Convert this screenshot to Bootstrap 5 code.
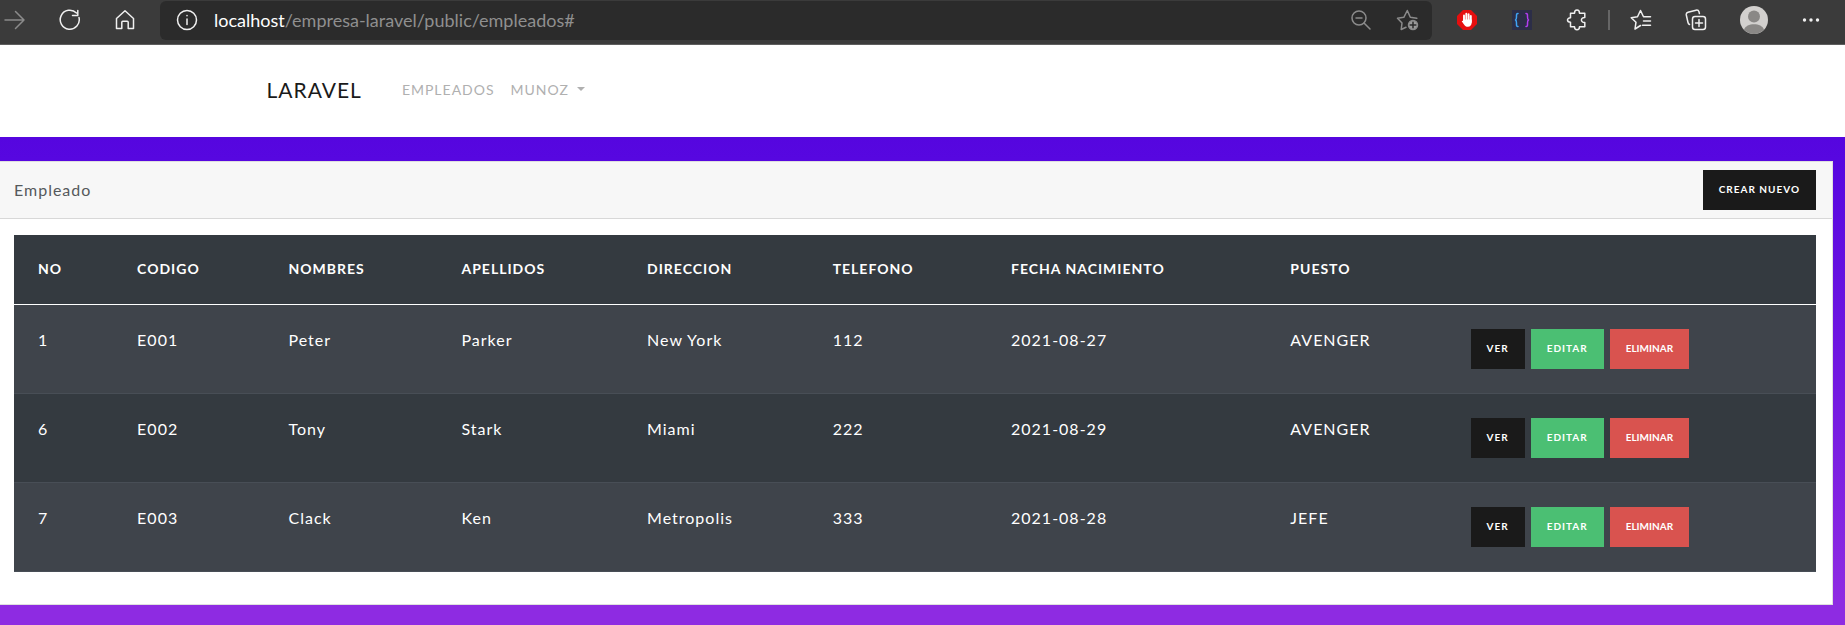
<!DOCTYPE html>
<html lang="es">
<head>
<meta charset="utf-8">
<meta name="viewport" content="width=device-width, initial-scale=1">
<title>Empleado</title>
<link href="https://cdn.jsdelivr.net/npm/bootstrap@5.3.0/dist/css/bootstrap.min.css" rel="stylesheet">
<style>
body { font-family: Lato, sans-serif; font-size: 16px; line-height: 24px; letter-spacing: 1px; color: #55595c; background: linear-gradient(to bottom, #4b00d9 0, #5707e0 160px, #8e2be2 600px); min-height: 100vh; }
.browser-bar { background: #3b3b3b; height: 45px; border-bottom: 1px solid #5e5e5e; letter-spacing: normal; padding: 0 24px 4px 4px; }
.browser-bar svg { display: block; fill: none; stroke: #f0f0f0; stroke-width: 1.5; stroke-linecap: round; stroke-linejoin: round; }
.browser-bar .dim { stroke: #8b8b8b; }
.bar-btn { background: none; border: 0; padding: 0; }
.nav-tools { gap: 33px; padding-right: 24px; }
.address { background: #2b2b2b; height: 39px; border-radius: 6px; padding: 0 12px 0 16px; gap: 16px; }
.address-text { font-size: 18px; color: #8f8f8f; }
.address-text b { font-weight: 400; color: #fff; }
.ext-tools { gap: 33px; padding-left: 24px; }
.ext-divider { width: 2px; height: 20px; background: #666; margin: 0 -13px; }
.site-nav { background: #fff; padding: 0 0 2px; height: 92px; }
.site-nav .container { max-width: 1336px; }
.site-nav .navbar-brand { font-size: 21px; color: #1a1a1a; margin-right: 32px; }
.site-nav .nav-link { font-size: 14px; color: #b0b0b0; }
.site-nav .dropdown-toggle::after { margin-left: 8px; }
.site-main { padding: 24px 12px 20px 0; }
.emp-card { border-radius: 0; border: 1px solid #dfdfdf; border-left: 0; background: #fff; }
.emp-card .card-header { background: #f7f7f7; border-bottom: 1px solid #d8d8d8; border-radius: 0; padding: 8px 16px 8px 14px; }
.emp-card .card-body { padding: 16px 16px 32px 14px; }
.btn-lux { border: 0; border-radius: 0; color: #fff; font-size: 10px; font-weight: 700; line-height: 16px; padding: 11px 16px 13px; letter-spacing: 1px; }
.btn-lux:hover { color: #fff; opacity: .9; }
.btn-ink, .btn-ink:hover { background: #1a1a1a; }
.btn-leaf, .btn-leaf:hover { background: #4bbf73; }
.btn-brick, .btn-brick:hover { background: #d9534f; letter-spacing: normal; }
.row-actions { gap: 6px; }
.emp-table { table-layout: fixed; margin: 0; }
.emp-table > :not(caption) > * > * { background: #343a40; color: #fff; padding: 23px 24px 25px; border-bottom: 1px solid #484e56; vertical-align: top; box-shadow: none; }
.emp-table > thead > tr > th { font-size: 14px; line-height: 21px; font-weight: 700; border-bottom-color: #fff; white-space: nowrap; }
.emp-table > tbody > tr:nth-child(odd) > td { background: #3f444b; }
.emp-table > tbody > tr > td.actions-cell { padding: 24px; }
.w-no { width: 5.5%; } .w-cod { width: 8.4%; } .w-nom { width: 9.6%; } .w-ape { width: 10.3%; } .w-dir { width: 10.3%; }
.w-tel { width: 9.9%; } .w-fec { width: 15.5%; } .w-pue { width: 10%; } .w-act { width: 20.5%; }
</style>
</head>
<body>
<header class="browser-bar d-flex align-items-center">
  <div class="nav-tools d-flex align-items-center">
    <button class="bar-btn" type="button" aria-label="Adelante"><svg class="dim" width="22" height="22" viewBox="0 0 22 22"><path d="M1 11h19M11.500 2.500 20 11l-8.500 8.500"/></svg></button>
    <button class="bar-btn" type="button" aria-label="Actualizar"><svg width="22" height="22" viewBox="0 0 22 22"><path d="M20 8.500A9.500 9.500 0 1 1 17.500 4M18.800 1.500V6.500H13.500"/></svg></button>
    <button class="bar-btn" type="button" aria-label="Inicio"><svg width="22" height="22" viewBox="0 0 22 22"><path d="M2.500 9.500 11 1.800l8.500 7.700V19.500h-5.300v-6.300a1 1 0 0 0-1-1H8.800a1 1 0 0 0-1 1v6.300H2.500z"/></svg></button>
  </div>
  <div class="address d-flex align-items-center flex-grow-1">
    <button class="bar-btn" type="button" aria-label="Información del sitio"><svg width="22" height="22" viewBox="0 0 22 22"><circle cx="11" cy="11" r="9.500"/><path d="M11 10v5.500M11 6.500v.2"/></svg></button>
    <a class="address-text flex-grow-1 text-decoration-none" href="#"><b>localhost</b>/empresa-laravel/public/empleados#</a>
    <button class="bar-btn" type="button" aria-label="Alejar"><svg class="dim" width="22" height="22" viewBox="0 0 22 22"><circle cx="9" cy="9" r="7"/><path d="M14 14l6 6M6 9h6"/></svg></button>
    <button class="bar-btn ms-2" type="button" aria-label="Agregar a favoritos"><svg class="dim" width="24" height="24" viewBox="0 0 24 24"><path d="M10 19.300 5.200 21.500 6 15 1.500 10.300l6.300-1L11.300 2.500l3 6.800 6.500 1"/><circle cx="17" cy="17" r="4.500" fill="#9a9a9a"/><path d="M17 14.200v5.600M14.200 17h5.600" stroke="#2b2b2b"/></svg></button>
  </div>
  <div class="ext-tools d-flex align-items-center">
    <button class="bar-btn" type="button" aria-label="Bloqueador"><svg width="22" height="22" viewBox="0 0 22 22"><path d="M7 1h8l6 6v8l-6 6H7l-6-6V7z" fill="#e60f0f" stroke="none"/><path d="M8 12V6.500M10.300 11V4.800M12.600 11V5.200M14.800 13V7" stroke="#fff" stroke-width="1.900"/><path d="M7 10.500h8.700v3c0 2.500-1.500 4.300-3.700 4.300-2 0-3-.6-4-2.300l-2.300-3.200c.5-.9 1.300-.6 1.800 0z" fill="#fff" stroke="none"/></svg></button>
    <button class="bar-btn" type="button" aria-label="Extensión de código"><svg width="22" height="22" viewBox="-1 -1 22 22"><path d="M0 0h20v20H0z" fill="#2c2e48" stroke="none"/><path d="M6 3.500C4.200 3.500 4.500 5 4.500 7S4.200 9.700 3.500 10c.7.3 1 1 1 3s-.3 3.500 1.500 3.500" stroke="#3fa4f5"/><path d="M14 3.500c1.800 0 1.500 1.500 1.500 3.500s.3 2.700 1 3c-.7.3-1 1-1 3s.3 3.500-1.500 3.500" stroke="#b23df0"/></svg></button>
    <button class="bar-btn" type="button" aria-label="Extensiones"><svg width="22" height="22" viewBox="0 0 22 22"><path d="M4.500 4.300h4c0-4.300 5-4.300 5 0h5.300v4.200c-4.500-.3-4.500 5.300 0 5v4.200h-5.300c0 4-5 4-5 0h-4v-4.500C.5 13.200.5 8.800 4.500 8.800z"/></svg></button>
    <span class="ext-divider"></span>
    <button class="bar-btn" type="button" aria-label="Favoritos"><svg width="22" height="22" viewBox="0 0 22 22"><path d="M10.500 16.500 5 20l1-6.800L1.200 8.700 7.500 7.800 10.500 1.500l3 6.300h7M13.500 12h7M12.500 16.200h8"/></svg></button>
    <button class="bar-btn" type="button" aria-label="Colecciones"><svg width="22" height="22" viewBox="0 0 22 22"><rect x="7.500" y="7.500" width="13" height="13" rx="2.500"/><path d="M14 10.500v7M10.500 14h7M4.500 15.500A3 3 0 0 1 3 13.500L1.300 6A2.500 2.500 0 0 1 3 3.200l8-2A2.500 2.500 0 0 1 14 2.800l.4 1.700"/></svg></button>
    <button class="bar-btn" type="button" aria-label="Perfil"><svg width="28" height="28" viewBox="0 0 28 28"><circle cx="14" cy="14" r="14" fill="#d2d0ce" stroke="none"/><circle cx="14" cy="10.500" r="6" fill="#8a8886" stroke="none"/><path d="M4 23.800C6 16.500 22 16.500 24 23.800A14 14 0 0 1 4 23.800z" fill="#8a8886" stroke="none"/></svg></button>
    <button class="bar-btn" type="button" aria-label="Más"><svg width="20" height="20" viewBox="0 0 20 20"><g fill="#f0f0f0" stroke="none"><circle cx="3.500" cy="10" r="1.700"/><circle cx="10" cy="10" r="1.700"/><circle cx="16.500" cy="10" r="1.700"/></g></svg></button>
  </div>
</header>
<nav class="navbar navbar-expand site-nav">
  <div class="container">
    <a class="navbar-brand" href="#">LARAVEL</a>
    <ul class="navbar-nav me-auto">
      <li class="nav-item"><a class="nav-link" href="#">EMPLEADOS</a></li>
      <li class="nav-item dropdown"><a class="nav-link dropdown-toggle" href="#" role="button" data-bs-toggle="dropdown">MUNOZ</a></li>
    </ul>
  </div>
</nav>
<main class="site-main">
  <div class="card emp-card">
    <div class="card-header d-flex justify-content-between align-items-center">
      <span>Empleado</span>
      <a class="btn btn-lux btn-ink" href="#">CREAR NUEVO</a>
    </div>
    <div class="card-body">
      <table class="table emp-table">
        <thead>
          <tr><th class="w-no">NO</th><th class="w-cod">CODIGO</th><th class="w-nom">NOMBRES</th><th class="w-ape">APELLIDOS</th><th class="w-dir">DIRECCION</th><th class="w-tel">TELEFONO</th><th class="w-fec">FECHA NACIMIENTO</th><th class="w-pue">PUESTO</th><th class="w-act"></th></tr>
        </thead>
        <tbody>
          <tr><td>1</td><td>E001</td><td>Peter</td><td>Parker</td><td>New York</td><td>112</td><td>2021-08-27</td><td>AVENGER</td>
            <td class="actions-cell"><form class="row-actions d-flex"><a class="btn btn-lux btn-ink" href="#">VER</a><a class="btn btn-lux btn-leaf" href="#">EDITAR</a><button class="btn btn-lux btn-brick" type="button">ELIMINAR</button></form></td></tr>
          <tr><td>6</td><td>E002</td><td>Tony</td><td>Stark</td><td>Miami</td><td>222</td><td>2021-08-29</td><td>AVENGER</td>
            <td class="actions-cell"><form class="row-actions d-flex"><a class="btn btn-lux btn-ink" href="#">VER</a><a class="btn btn-lux btn-leaf" href="#">EDITAR</a><button class="btn btn-lux btn-brick" type="button">ELIMINAR</button></form></td></tr>
          <tr><td>7</td><td>E003</td><td>Clack</td><td>Ken</td><td>Metropolis</td><td>333</td><td>2021-08-28</td><td>JEFE</td>
            <td class="actions-cell"><form class="row-actions d-flex"><a class="btn btn-lux btn-ink" href="#">VER</a><a class="btn btn-lux btn-leaf" href="#">EDITAR</a><button class="btn btn-lux btn-brick" type="button">ELIMINAR</button></form></td></tr>
        </tbody>
      </table>
    </div>
  </div>
</main>
<script src="https://cdn.jsdelivr.net/npm/bootstrap@5.3.0/dist/js/bootstrap.bundle.min.js"></script>
</body>
</html>
